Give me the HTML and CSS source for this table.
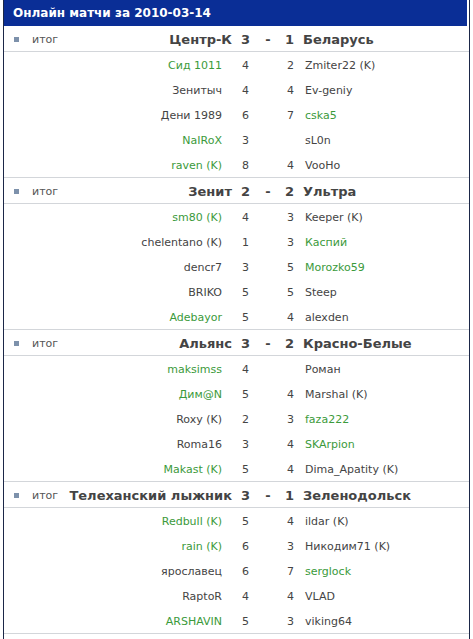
FILE: index.html
```html
<!DOCTYPE html>
<html lang="ru">
<head>
<meta charset="utf-8">
<title>Онлайн матчи</title>
<link rel="stylesheet" href="styles.css">
</head>
<body>
<div class="box">
  <div class="title">Онлайн матчи за 2010-03-14</div>

  <div class="match">
    <div class="mhead">
      <div class="left"><span class="status"><span class="bullet"></span>итог</span><span class="team">Центр-К</span></div>
      <span class="s1">3</span><span class="dash">-</span><span class="s2">1</span><span class="team2">Беларусь</span>
    </div>
    <div class="prow"><span class="n1 g">Сид 1011</span><span class="p1">4</span><span class="p2">2</span><span class="n2">Zmiter22 (K)</span></div>
    <div class="prow"><span class="n1">Зенитыч</span><span class="p1">4</span><span class="p2">4</span><span class="n2">Ev-geniy</span></div>
    <div class="prow"><span class="n1">Дени 1989</span><span class="p1">6</span><span class="p2">7</span><span class="n2 g">cska5</span></div>
    <div class="prow"><span class="n1 g">NaIRoX</span><span class="p1">3</span><span class="p2"></span><span class="n2">sL0n</span></div>
    <div class="prow"><span class="n1 g">raven (K)</span><span class="p1">8</span><span class="p2">4</span><span class="n2">VooHo</span></div>
  </div>

  <div class="match">
    <div class="mhead">
      <div class="left"><span class="status"><span class="bullet"></span>итог</span><span class="team">Зенит</span></div>
      <span class="s1">2</span><span class="dash">-</span><span class="s2">2</span><span class="team2">Ультра</span>
    </div>
    <div class="prow"><span class="n1 g">sm80 (K)</span><span class="p1">4</span><span class="p2">3</span><span class="n2">Keeper (K)</span></div>
    <div class="prow"><span class="n1">chelentano (K)</span><span class="p1">1</span><span class="p2">3</span><span class="n2 g">Каспий</span></div>
    <div class="prow"><span class="n1">dencr7</span><span class="p1">3</span><span class="p2">5</span><span class="n2 g">Morozko59</span></div>
    <div class="prow"><span class="n1">BRIKO</span><span class="p1">5</span><span class="p2">5</span><span class="n2">Steep</span></div>
    <div class="prow"><span class="n1 g">Adebayor</span><span class="p1">5</span><span class="p2">4</span><span class="n2">alexden</span></div>
  </div>

  <div class="match">
    <div class="mhead">
      <div class="left"><span class="status"><span class="bullet"></span>итог</span><span class="team">Альянс</span></div>
      <span class="s1">3</span><span class="dash">-</span><span class="s2">2</span><span class="team2">Красно-Белые</span>
    </div>
    <div class="prow"><span class="n1 g">maksimss</span><span class="p1">4</span><span class="p2"></span><span class="n2">Роман</span></div>
    <div class="prow"><span class="n1 g">Дим@N</span><span class="p1">5</span><span class="p2">4</span><span class="n2">Marshal (K)</span></div>
    <div class="prow"><span class="n1">Roxy (K)</span><span class="p1">2</span><span class="p2">3</span><span class="n2 g">faza222</span></div>
    <div class="prow"><span class="n1">Roma16</span><span class="p1">3</span><span class="p2">4</span><span class="n2 g">SKArpion</span></div>
    <div class="prow"><span class="n1 g">Makast (K)</span><span class="p1">5</span><span class="p2">4</span><span class="n2">Dima_Apatity (K)</span></div>
  </div>

  <div class="match">
    <div class="mhead">
      <div class="left"><span class="status"><span class="bullet"></span>итог</span><span class="team">Телеханский лыжник</span></div>
      <span class="s1">3</span><span class="dash">-</span><span class="s2">1</span><span class="team2">Зеленодольск</span>
    </div>
    <div class="prow"><span class="n1 g">Redbull (K)</span><span class="p1">5</span><span class="p2">4</span><span class="n2">ildar (K)</span></div>
    <div class="prow"><span class="n1 g">rain (K)</span><span class="p1">6</span><span class="p2">3</span><span class="n2">Никодим71 (K)</span></div>
    <div class="prow"><span class="n1">ярославец</span><span class="p1">6</span><span class="p2">7</span><span class="n2 g">serglock</span></div>
    <div class="prow"><span class="n1">RaptoR</span><span class="p1">4</span><span class="p2">4</span><span class="n2">VLAD</span></div>
    <div class="prow"><span class="n1 g">ARSHAVIN</span><span class="p1">5</span><span class="p2">3</span><span class="n2">viking64</span></div>
  </div>
</div>
</body>
</html>
```

FILE: styles.css
```css
html, body {
  margin: 0;
  padding: 0;
  background: #ffffff;
}

body {
  font-family: "DejaVu Sans", Verdana, sans-serif;
  font-size: 11px;
  color: #444444;
}

.box {
  margin-left: 3px;
  width: 465px;
  min-height: 639px;
  border-left: 1px solid #1b2747;
  border-right: 1px solid #1b2747;
  box-sizing: content-box;
}

.title {
  height: 26px;
  margin-right: 2px;
  background: #0a2e96;
  color: #ffffff;
  font-weight: bold;
  font-size: 12px;
  line-height: 26px;
  padding-left: 9px;
}

.match {
  border-bottom: 1px solid #d3d6da;
}

.mhead {
  display: grid;
  grid-template-columns: 228px 24px 24px 14px 1fr;
  height: 26px;
  padding-top: 1px;
  box-sizing: border-box;
  align-items: center;
  border-bottom: 1px solid #d3d6da;
  font-weight: bold;
  font-size: 13px;
  color: #444444;
}

.left {
  display: flex;
  justify-content: space-between;
  align-items: center;
}

.status {
  display: flex;
  align-items: center;
  font-weight: normal;
  font-size: 11px;
  color: #555555;
  padding-left: 10px;
}

.bullet {
  width: 5px;
  height: 5px;
  background: #7d91ab;
  margin-right: 13px;
}

.team {
  text-align: right;
  white-space: nowrap;
}

.s1 {
  padding-left: 9px;
}

.dash {
  text-align: center;
}

.s2 {
  text-align: right;
}

.team2 {
  padding-left: 9px;
  white-space: nowrap;
}

.prow {
  display: grid;
  grid-template-columns: 218px 32px 40px 1fr;
  height: 25px;
  padding-top: 1px;
  box-sizing: border-box;
  align-items: center;
  color: #444444;
}

.n1 {
  text-align: right;
  white-space: nowrap;
}

.p1 {
  padding-left: 20px;
}

.p2 {
  text-align: right;
}

.n2 {
  padding-left: 11px;
  white-space: nowrap;
}

.g {
  color: #3b9a3b;
}
```
